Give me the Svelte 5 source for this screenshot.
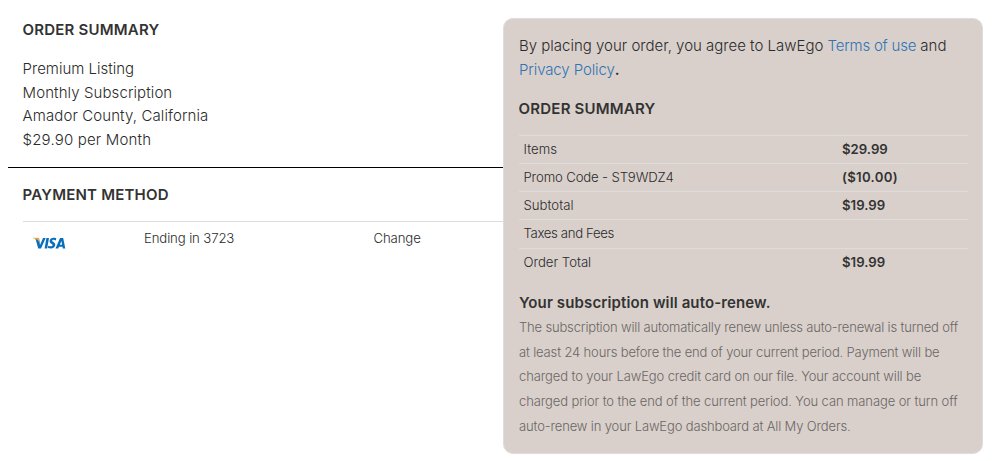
<script>
  const plan = [
    { text: 'Premium Listing', cls: 'p1' },
    { text: 'Monthly Subscription', cls: 'p2' },
    { text: 'Amador County, California', cls: 'p3' },
    { text: '$29.90 per Month', cls: 'p4' }
  ];
  const rows = [
    { label: 'Items', value: '$29.99', cls: 'r1' },
    { label: 'Promo Code - ST9WDZ4', value: '($10.00)', cls: 'r2' },
    { label: 'Subtotal', value: '$19.99', cls: 'r3' },
    { label: 'Taxes and Fees', value: '', cls: 'r4' },
    { label: 'Order Total', value: '$19.99', cls: 'r5' }
  ];
  const notice = [
    { text: 'The subscription will automatically renew unless auto-renewal is turned off', cls: 'n1' },
    { text: 'at least 24 hours before the end of your current period. Payment will be', cls: 'n2' },
    { text: 'charged to your LawEgo credit card on our file. Your account will be', cls: 'n3' },
    { text: 'charged prior to the end of the current period. You can manage or turn off', cls: 'n4' },
    { text: 'auto-renew in your LawEgo dashboard at All My Orders.', cls: 'n5' }
  ];
</script>

<main class="page">
  <section class="details">
    <div class="block plan">
      <h2><span class="os">ORDER SUMMARY</span></h2>
      <div class="lines">
        {#each plan as line}
          <div><span class={line.cls}>{line.text}</span></div>
        {/each}
      </div>
    </div>
    <div class="block payment">
      <h2><span class="pm">PAYMENT METHOD</span></h2>
      <div class="card-row">
        <div class="brand">
          <svg width="34" height="14" viewBox="0 0 34 14" role="img" aria-label="Visa">
            <path fill="#0870ba" d="M3 2H7L8 9L11 2H13.7L9 12.4H6.2L4 4.6ZM14.4 2H17L15.2 12.4H12.6ZM24.2 2.2L23.8 4.4C21.9 3.6 20.2 3.7 20.2 4.7C20.2 5.8 23.4 6.1 23.3 8.8C23.2 12 19.8 13.2 15.9 12L16.3 9.7C18.2 10.6 20.5 10.4 20.6 9.2C20.7 8 17.5 7.8 17.6 5.1C17.7 2.2 20.8 1.1 24.2 2.2ZM28 2H31.2L33.3 12.4H30.8L30.5 10.8H27L26.3 12.4H23.5ZM29.4 5L27.9 8.7H30.1Z" />
            <path fill="#f2a541" d="M0.8 1.8H5.6C6.5 1.8 6.9 2.2 7 3L7.6 6.5C6.3 4 4 2.5 0.8 2.2Z" />
          </svg>
        </div>
        <div class="ending"><span class="en">Ending in 3723</span></div>
        <div class="change"><span class="ch">Change</span></div>
      </div>
    </div>
  </section>

  <aside class="summary">
    <p class="terms">
      <span class="t1">By placing your order, you agree to LawEgo <a href="#terms">Terms of use</a> and</span><br />
      <span class="t2"><a href="#privacy">Privacy Policy</a><b>.</b></span>
    </p>
    <h2><span class="os">ORDER SUMMARY</span></h2>
    <div class="table">
      {#each rows as row}
        <div class="row {row.cls}">
          <div class="label"><span>{row.label}</span></div>
          <div class="value"><span>{row.value}</span></div>
        </div>
      {/each}
    </div>
    <h3><span class="renew">Your subscription will auto-renew.</span></h3>
    <div class="notice">
      {#each notice as line}
        <div><span class={line.cls}>{line.text}</span></div>
      {/each}
    </div>
  </aside>
</main>

<style>
  :global(body) { background: #fff; }
  .page {
    box-sizing: border-box;
    width: 996px;
    height: 461px;
    padding-left: 8px;
    display: flex;
    align-items: flex-start;
    overflow: hidden;
    font-family: Inter, "Liberation Sans", sans-serif;
    font-weight: 300;
    font-size: 15px;
    color: #2b2b2b;
    white-space: nowrap;
  }
  h2, h3, p { margin: 0; }
  h2 { font-size: 15px; font-weight: 600; line-height: 20px; color: #333; }
  a { color: #2f74b5; text-decoration: none; }
  .details { width: 495px; }
  .block { padding-left: 14.6px; }
  .plan { box-sizing: border-box; height: 168px; padding-top: 20px; border-bottom: 1px solid #000; }
  .lines { margin-top: 17px; line-height: 23.6px; }
  .payment { padding-left: 15px; padding-top: 17px; }
  .payment h2 { margin-left: -0.4px; }
  .card-row { display: flex; margin-top: 16px; border-top: 1px solid #ddd; font-size: 13.2px; line-height: 20px; padding-top: 6px; }
  .brand { width: 121px; padding: 8px 0 0 9.4px; box-sizing: border-box; line-height: 0; }
  .ending { width: 229.4px; }

  .os, .pm { letter-spacing: 0.2px; }
  .p2 { letter-spacing: 0.09px; }
  .p3 { letter-spacing: 0.1px; }
  .p4 { letter-spacing: 0.17px; }
  .en { letter-spacing: -0.13px; }
  .ch { letter-spacing: -0.1px; }
  .t1 a { letter-spacing: -0.22px; }
  .t2 { letter-spacing: -0.11px; }
  .renew { letter-spacing: 0.12px; }

  .summary {
    box-sizing: border-box;
    width: 480px;
    height: 436px;
    margin-top: 18px;
    padding: 15px 15px 0;
    border: 1px solid #ddd;
    border-radius: 10px;
    background: #d9d0cb;
  }
  .terms { line-height: 24px; margin-bottom: 17px; }
  .terms b { font-weight: 600; }
  .summary h2 { margin-left: -0.4px; }
  .table { margin-top: 16px; width: 449px; font-size: 13.2px; }
  .row { display: flex; height: 27px; line-height: 27px; border-top: 1px solid #ddd; }
  .r4 { height: 28px; }
  .label { width: 319px; padding-left: 4.5px; box-sizing: border-box; }
  .r2 .label { letter-spacing: -0.16px; }
  .r4 .label { letter-spacing: -0.36px; }
  .r5 .label { letter-spacing: -0.04px; }
  .value { padding-left: 4px; font-weight: 600; color: #333; }
  .r2 .value { letter-spacing: 0.3px; }
  h3 { margin-top: 17px; font-size: 15px; font-weight: 600; line-height: 20px; color: #333; }
  .notice { font-size: 13px; line-height: 24.7px; margin-top: 2px; color: #6a6664; }
  .n1 { letter-spacing: -0.17px; }
  .n2 { letter-spacing: -0.15px; }
  .n3 { letter-spacing: -0.11px; }
  .n4 { letter-spacing: -0.1px; }
  .n5 { letter-spacing: -0.14px; }
</style>
